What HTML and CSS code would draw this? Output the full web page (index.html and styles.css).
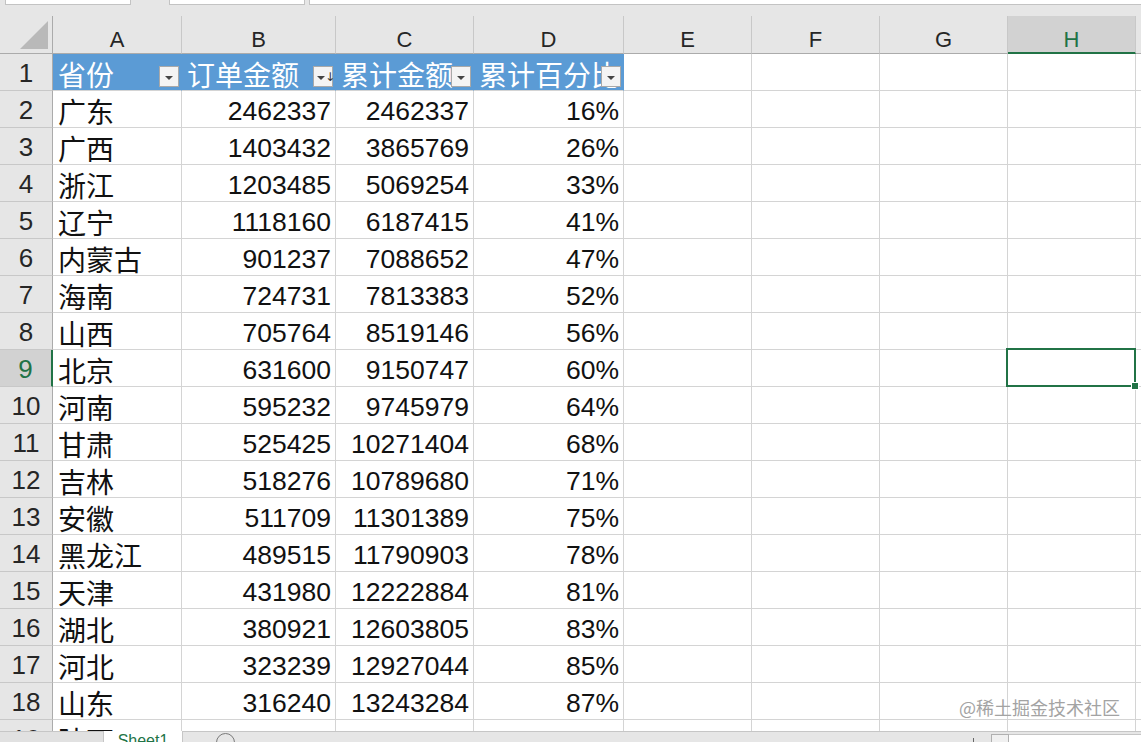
FILE: index.html
```html
<!DOCTYPE html>
<html lang="zh">
<head>
<meta charset="utf-8">
<title>Sheet1</title>
<link rel="stylesheet" href="styles.css">
</head>
<body>
<div class="app">
  <div class="topbar">
    <div class="tb tb1"></div>
    <div class="tb tb2"></div>
    <div class="tb tb3"></div>
  </div>
  <div class="sheet">
    <div class="grid">
      <div class="corner"><svg width="30" height="30" viewBox="0 0 30 30"><polygon points="29,1 29,29 1,29" fill="#b9b9b9"/></svg></div>
      <div class="ch">A</div><div class="ch">B</div><div class="ch">C</div><div class="ch">D</div><div class="ch">E</div><div class="ch">F</div><div class="ch">G</div><div class="ch ch-sel">H</div><div class="ch"></div>

      <div class="rh">1</div>
      <div class="c hd t">省份<span class="fb"><i class="tri"></i></span></div>
      <div class="c hd t">订单金额<span class="fb fb-sort"><i class="tri"></i><i class="arr">↓</i></span></div>
      <div class="c hd t">累计金额<span class="fb"><i class="tri"></i></span></div>
      <div class="c hd t">累计百分比<span class="fb"><i class="tri"></i></span></div>
      <div class="c"></div><div class="c"></div><div class="c"></div><div class="c"></div><div class="c"></div>

      <div class="rh">2</div><div class="c t">广东</div><div class="c n">2462337</div><div class="c n">2462337</div><div class="c n">16%</div><div class="c"></div><div class="c"></div><div class="c"></div><div class="c"></div><div class="c"></div>
      <div class="rh">3</div><div class="c t">广西</div><div class="c n">1403432</div><div class="c n">3865769</div><div class="c n">26%</div><div class="c"></div><div class="c"></div><div class="c"></div><div class="c"></div><div class="c"></div>
      <div class="rh">4</div><div class="c t">浙江</div><div class="c n">1203485</div><div class="c n">5069254</div><div class="c n">33%</div><div class="c"></div><div class="c"></div><div class="c"></div><div class="c"></div><div class="c"></div>
      <div class="rh">5</div><div class="c t">辽宁</div><div class="c n">1118160</div><div class="c n">6187415</div><div class="c n">41%</div><div class="c"></div><div class="c"></div><div class="c"></div><div class="c"></div><div class="c"></div>
      <div class="rh">6</div><div class="c t">内蒙古</div><div class="c n">901237</div><div class="c n">7088652</div><div class="c n">47%</div><div class="c"></div><div class="c"></div><div class="c"></div><div class="c"></div><div class="c"></div>
      <div class="rh">7</div><div class="c t">海南</div><div class="c n">724731</div><div class="c n">7813383</div><div class="c n">52%</div><div class="c"></div><div class="c"></div><div class="c"></div><div class="c"></div><div class="c"></div>
      <div class="rh">8</div><div class="c t">山西</div><div class="c n">705764</div><div class="c n">8519146</div><div class="c n">56%</div><div class="c"></div><div class="c"></div><div class="c"></div><div class="c"></div><div class="c"></div>
      <div class="rh rh-sel">9</div><div class="c t">北京</div><div class="c n">631600</div><div class="c n">9150747</div><div class="c n">60%</div><div class="c"></div><div class="c"></div><div class="c"></div><div class="c sel"></div><div class="c"></div>
      <div class="rh">10</div><div class="c t">河南</div><div class="c n">595232</div><div class="c n">9745979</div><div class="c n">64%</div><div class="c"></div><div class="c"></div><div class="c"></div><div class="c"></div><div class="c"></div>
      <div class="rh">11</div><div class="c t">甘肃</div><div class="c n">525425</div><div class="c n">10271404</div><div class="c n">68%</div><div class="c"></div><div class="c"></div><div class="c"></div><div class="c"></div><div class="c"></div>
      <div class="rh">12</div><div class="c t">吉林</div><div class="c n">518276</div><div class="c n">10789680</div><div class="c n">71%</div><div class="c"></div><div class="c"></div><div class="c"></div><div class="c"></div><div class="c"></div>
      <div class="rh">13</div><div class="c t">安徽</div><div class="c n">511709</div><div class="c n">11301389</div><div class="c n">75%</div><div class="c"></div><div class="c"></div><div class="c"></div><div class="c"></div><div class="c"></div>
      <div class="rh">14</div><div class="c t">黑龙江</div><div class="c n">489515</div><div class="c n">11790903</div><div class="c n">78%</div><div class="c"></div><div class="c"></div><div class="c"></div><div class="c"></div><div class="c"></div>
      <div class="rh">15</div><div class="c t">天津</div><div class="c n">431980</div><div class="c n">12222884</div><div class="c n">81%</div><div class="c"></div><div class="c"></div><div class="c"></div><div class="c"></div><div class="c"></div>
      <div class="rh">16</div><div class="c t">湖北</div><div class="c n">380921</div><div class="c n">12603805</div><div class="c n">83%</div><div class="c"></div><div class="c"></div><div class="c"></div><div class="c"></div><div class="c"></div>
      <div class="rh">17</div><div class="c t">河北</div><div class="c n">323239</div><div class="c n">12927044</div><div class="c n">85%</div><div class="c"></div><div class="c"></div><div class="c"></div><div class="c"></div><div class="c"></div>
      <div class="rh">18</div><div class="c t">山东</div><div class="c n">316240</div><div class="c n">13243284</div><div class="c n">87%</div><div class="c"></div><div class="c"></div><div class="c"></div><div class="c"></div><div class="c"></div>
      <div class="rh">19</div><div class="c t">陕西</div><div class="c n">342876</div><div class="c n">13586160</div><div class="c n">90%</div><div class="c"></div><div class="c"></div><div class="c"></div><div class="c"></div><div class="c"></div>
    </div>
    <div class="watermark">@稀土掘金技术社区</div>
  </div>
  <div class="tabbar">
    <div class="tab-left"></div>
    <div class="tab">Sheet1</div>
    <div class="tab-nav"><span class="circle"></span></div>
    <div class="tick"></div>
    <div class="hs-btn"></div>
    <div class="hs-track"></div>
  </div>
</div>
</body>
</html>
```

FILE: styles.css
```css
* { box-sizing: border-box; }

html, body {
  margin: 0;
  padding: 0;
  background: #e6e6e6;
}

.app {
  width: 1141px;
  height: 742px;
  display: flex;
  flex-direction: column;
  overflow: hidden;
  font-family: "Liberation Sans", "Noto Sans CJK SC", sans-serif;
  color: #1a1a1a;
}

/* top strip */
.topbar {
  height: 16px;
  flex-shrink: 0;
  display: flex;
  align-items: flex-start;
  padding-left: 5px;
  background: #e6e6e6;
}
.tb {
  height: 5px;
  background: #fff;
  border: 1px solid #c3c3c3;
  border-top: none;
}
.tb1 { width: 126px; }
.tb2 { width: 136px; margin-left: 38px; }
.tb3 { flex: 1; margin-left: 4px; border-right: none; }

/* sheet */
.sheet {
  flex: 1;
  position: relative;
  overflow: hidden;
  background: #fff;
}

.grid {
  display: grid;
  grid-template-columns: 53px 129px 154px 138px 150px 128px 128px 128px 128px 1fr;
  grid-template-rows: 38px;
  grid-auto-rows: 37px;
}

.corner {
  background: #e6e6e6;
  border-right: 1px solid #ababab;
  border-bottom: 1px solid #ababab;
  display: flex;
  align-items: flex-end;
  justify-content: flex-end;
  padding: 0 3px 3px 0;
}
.corner svg { display: block; }

.ch {
  background: #e6e6e6;
  border-right: 1px solid #c8c8c8;
  border-bottom: 1px solid #ababab;
  display: flex;
  justify-content: center;
  align-items: flex-end;
  padding-bottom: 1px;
  font-size: 22px;
  line-height: 1.15;
  color: #262626;
}
.ch-sel {
  background: #d2d2d2;
  color: #217346;
  border-bottom: 2px solid #217346;
  padding-bottom: 0;
}

.rh {
  background: #e6e6e6;
  border-right: 1px solid #ababab;
  border-bottom: 1px solid #c8c8c8;
  display: flex;
  justify-content: center;
  align-items: flex-end;
  padding-bottom: 1px;
  font-size: 26px;
  line-height: 1.15;
  color: #262626;
}
.rh-sel {
  background: #d2d2d2;
  color: #217346;
  border-right: 2px solid #217346;
}

.c {
  position: relative;
  border-right: 1px solid #d4d4d4;
  border-bottom: 1px solid #d4d4d4;
  display: flex;
  align-items: flex-end;
  padding: 0 5px 1px 5px;
  white-space: nowrap;
  overflow: hidden;
  line-height: 1.15;
}
.t {
  font-family: "Noto Sans CJK SC", sans-serif;
  font-size: 28px;
  line-height: 1.1;
  padding-bottom: 0;
  overflow: visible;
  color: #111;
}
.n {
  justify-content: flex-end;
  font-size: 26.5px;
  padding-right: 4px;
  color: #111;
}

/* table header row */
.hd {
  background: #5b9bd5;
  color: #fff;
  border-right-color: #5b9bd5;
}
.fb {
  position: absolute;
  right: 2px;
  bottom: 3px;
  width: 20px;
  height: 21px;
  background: #f4f4f4;
  border: 1px solid #a9a9a9;
  display: flex;
  align-items: center;
  justify-content: center;
  z-index: 2;
}
.tri {
  display: block;
  width: 0;
  height: 0;
  border-left: 4px solid transparent;
  border-right: 4px solid transparent;
  border-top: 4px solid #444;
  margin-top: 3px;
}
.fb-sort { justify-content: flex-start; padding-left: 3px; gap: 0; }
.arr {
  font-style: normal;
  font-family: "DejaVu Sans", sans-serif;
  font-size: 12px;
  color: #333;
  line-height: 1;
  margin-top: 1px;
}

/* selected cell */
.sel { overflow: visible; }
.sel::after {
  content: "";
  position: absolute;
  left: -2px;
  top: -2px;
  right: -1px;
  bottom: -1px;
  border: 2px solid #217346;
  z-index: 3;
}
.sel::before {
  content: "";
  position: absolute;
  right: -4px;
  bottom: -4px;
  width: 6px;
  height: 6px;
  background: #217346;
  border: 1px solid #fff;
  z-index: 4;
}

.watermark {
  position: absolute;
  left: 959px;
  top: 681px;
  font-family: "Noto Sans CJK SC", sans-serif;
  font-size: 18px;
  line-height: 1.2;
  color: #a3a3a3;
  z-index: 5;
}

/* bottom tab bar */
.tabbar {
  height: 11px;
  flex-shrink: 0;
  display: flex;
  background: #e6e6e6;
  border-top: 1px solid #c6c6c6;
  position: relative;
}
.tab-left { width: 103px; background: #e1e1e1; }
.tab {
  width: 80px;
  margin-top: -1px;
  background: #fff;
  border-left: 1px solid #c6c6c6;
  border-right: 1px solid #c6c6c6;
  color: #217346;
  font-family: "Liberation Sans", sans-serif;
  font-size: 16px;
  line-height: 1.15;
  padding-top: 1px;
  text-align: center;
  overflow: hidden;
}
.tab-nav {
  width: 790px;
  padding-left: 33px;
  overflow: hidden;
}
.circle {
  display: block;
  width: 19px;
  height: 19px;
  margin-top: 1px;
  border: 1.5px solid #7a7a7a;
  border-radius: 50%;
}
.tick {
  width: 1px;
  height: 4px;
  margin-top: 6px;
  background: #666;
}
.hs-btn {
  width: 18px;
  margin-left: 17px;
  margin-top: 2px;
  border-left: 1px solid #b0b0b0;
  border-right: 1px solid #b0b0b0;
  border-top: 1px solid #b0b0b0;
  background: #f0f0f0;
}
.hs-track {
  flex: 1;
  margin-top: 2px;
  background: #fff;
  border-top: 1px solid #c6c6c6;
}
```
